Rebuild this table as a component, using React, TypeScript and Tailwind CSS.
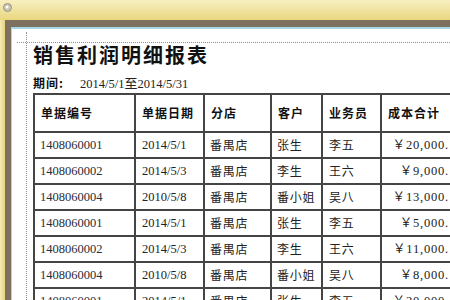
import React from "react";

const rows = [
  ["1408060001", "2014/5/1", "番禺店", "张生", "李五", "￥20,000."],
  ["1408060002", "2014/5/3", "番禺店", "李生", "王六", "￥9,000."],
  ["1408060004", "2010/5/8", "番禺店", "番小姐", "吴八", "￥13,000."],
  ["1408060001", "2014/5/1", "番禺店", "张生", "李五", "￥5,000."],
  ["1408060002", "2014/5/3", "番禺店", "李生", "王六", "￥11,000."],
  ["1408060004", "2010/5/8", "番禺店", "番小姐", "吴八", "￥8,000."],
  ["1408060001", "2014/5/1", "番禺店", "张生", "李五", "￥20,000."],
];

const headers = ["单据编号", "单据日期", "分店", "客户", "业务员", "成本合计"];

const cjk = "font-['Noto_Sans_CJK_SC',sans-serif]";
const num = "font-['Liberation_Serif','Noto_Sans_CJK_SC',serif]";

export default function App() {
  return (
    <div className="w-[450px] h-[300px] overflow-hidden flex flex-col bg-[#ecdc8a]">
      <div className="h-[20px] shrink-0 bg-gradient-to-b from-[#f7efc0] to-[#e9d77e] pl-[3px] pt-[3px]">
        <svg width="9" height="9" viewBox="0 0 9 9">
          <circle cx="4.5" cy="4.5" r="4" fill="#c9c3b2" stroke="#8d8677" strokeWidth="0.8" />
          <circle cx="4" cy="4" r="1.6" fill="#ffffff" />
        </svg>
      </div>
      <div className="flex-1 flex min-h-0">
        <div className="w-[5px] shrink-0 bg-gradient-to-r from-[#f5ebb6] to-[#e4d27a]" />
        <div className="flex-1 min-w-0 border-t-[7px] border-l-[6px] border-[#7d705f]">
          <div className="h-full border-t-2 border-l border-[#a4d8e9] bg-white relative overflow-hidden">
            <div className="absolute left-[5px] right-0 top-[13px] border-t border-dotted border-[#8f8f8f]" />
            <div className="absolute left-[14px] top-[3px] bottom-0 border-l border-dotted border-[#8f8f8f]" />
            <div className="pl-[21px] pt-[14px]">
              <h1 className={`${cjk} text-[20px] leading-[24px] font-bold tracking-[2px] text-[#111]`}>
                销售利润明细报表
              </h1>
              <div className="mt-[6px] flex items-baseline h-[16px]">
                <span className={`${cjk} text-[12px] font-bold tracking-[1px] text-[#111] w-[47px]`}>期间:</span>
                <span className={`${num} text-[12.5px] text-[#222]`}>
                  2014/5/1<span className={`${cjk} text-[13px]`}>至</span>2014/5/31
                </span>
              </div>
              <table className="mt-[4px] border-collapse table-fixed w-[422px]">
                <colgroup>
                  <col className="w-[101px]" />
                  <col className="w-[69px]" />
                  <col className="w-[67px]" />
                  <col className="w-[51px]" />
                  <col className="w-[59px]" />
                  <col className="w-[75px]" />
                </colgroup>
                <thead>
                  <tr className="h-[38px]">
                    {headers.map((h) => (
                      <th
                        key={h}
                        className={`${cjk} border-2 border-[#454545] text-left pl-[6px] text-[12px] font-bold tracking-[1px] text-[#111] whitespace-nowrap`}
                      >
                        {h}
                      </th>
                    ))}
                  </tr>
                </thead>
                <tbody>
                  {rows.map((r, i) => (
                    <tr key={i} className="h-[26px]">
                      <td className={`${num} border-2 border-[#454545] pl-[5px] text-[12.5px] text-[#2a2c38] whitespace-nowrap`}>{r[0]}</td>
                      <td className={`${num} border-2 border-[#454545] pl-[6px] text-[12.5px] text-[#222] whitespace-nowrap`}>{r[1]}</td>
                      <td className={`${cjk} border-2 border-[#454545] pl-[5px] text-[12px] tracking-[0.7px] text-[#222] whitespace-nowrap`}>{r[2]}</td>
                      <td className={`${cjk} border-2 border-[#454545] pl-[5px] text-[12px] tracking-[0.7px] text-[#222] whitespace-nowrap`}>{r[3]}</td>
                      <td className={`${cjk} border-2 border-[#454545] pl-[6px] text-[12px] tracking-[0.7px] text-[#222] whitespace-nowrap`}>{r[4]}</td>
                      <td className={`${num} border-2 border-[#454545] pr-[6px] text-right text-[12.5px] tracking-[0.8px] text-[#222] whitespace-nowrap overflow-hidden`}>{r[5]}</td>
                    </tr>
                  ))}
                </tbody>
              </table>
            </div>
          </div>
        </div>
      </div>
    </div>
  );
}
